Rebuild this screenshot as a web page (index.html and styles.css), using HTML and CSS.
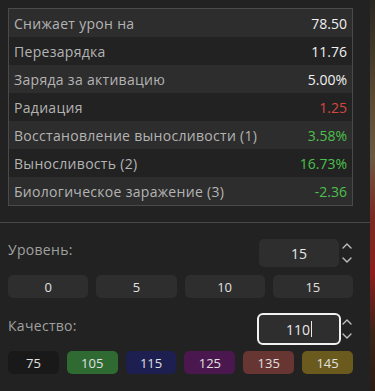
FILE: index.html
```html
<!DOCTYPE html>
<html>

<head>
    <meta charset="utf-8">
    <link rel="stylesheet" href="styles.css">
</head>

<body>
    <div class="screen">
        <div class="panel">
            <!-- Stats table -->
            <div class="stats-area">
                <div class="stats">
                    <div class="stat-row"><span class="stat-name">Снижает урон на</span><span class="stat-value">78.50</span></div>
                    <div class="stat-row"><span class="stat-name">Перезарядка</span><span class="stat-value">11.76</span></div>
                    <div class="stat-row"><span class="stat-name">Заряда за активацию</span><span class="stat-value">5.00%</span></div>
                    <div class="stat-row"><span class="stat-name">Радиация</span><span class="stat-value bad">1.25</span></div>
                    <div class="stat-row"><span class="stat-name">Восстановление выносливости (1)</span><span class="stat-value good">3.58%</span></div>
                    <div class="stat-row"><span class="stat-name">Выносливость (2)</span><span class="stat-value good">16.73%</span></div>
                    <div class="stat-row"><span class="stat-name">Биологическое заражение (3)</span><span class="stat-value good">-2.36</span></div>
                </div>
            </div>

            <!-- Level and quality controls -->
            <div class="controls">
                <div class="field-row">
                    <div class="field-label">Уровень:</div>
                    <div class="number-field">
                        <div class="number-box">15</div>
                        <svg class="spinner" width="14" height="28" viewBox="0 0 14 28">
                            <path d="M3 9 L7 5 L11 9" fill="none" stroke="#bdbdbd" stroke-width="1.4" stroke-linecap="round" stroke-linejoin="round" />
                            <path d="M3 19 L7 23 L11 19" fill="none" stroke="#bdbdbd" stroke-width="1.4" stroke-linecap="round" stroke-linejoin="round" />
                        </svg>
                    </div>
                </div>
                <div class="preset-row level-presets">
                    <button class="preset">0</button>
                    <button class="preset">5</button>
                    <button class="preset">10</button>
                    <button class="preset">15</button>
                </div>

                <div class="field-row quality-row">
                    <div class="field-label">Качество:</div>
                    <div class="number-field">
                        <div class="number-box focused">110<span class="caret"></span></div>
                        <svg class="spinner" width="14" height="28" viewBox="0 0 14 28">
                            <path d="M3 9 L7 5 L11 9" fill="none" stroke="#bdbdbd" stroke-width="1.4" stroke-linecap="round" stroke-linejoin="round" />
                            <path d="M3 19 L7 23 L11 19" fill="none" stroke="#bdbdbd" stroke-width="1.4" stroke-linecap="round" stroke-linejoin="round" />
                        </svg>
                    </div>
                </div>
                <div class="preset-row quality-presets">
                    <button class="preset q75">75</button>
                    <button class="preset q105">105</button>
                    <button class="preset q115">115</button>
                    <button class="preset q125">125</button>
                    <button class="preset q135">135</button>
                    <button class="preset q145">145</button>
                </div>
            </div>
        </div>
        <div class="backdrop"></div>
    </div>
</body>

</html>
```

FILE: styles.css
```css
body {
    margin: 0;
    background-color: #212121;
    font-family: 'Open Sans', 'Liberation Sans', sans-serif;
    font-size: 14px;
    color: #e6e6e6;
}

.screen {
    display: flex;
    height: 391px;
    overflow: hidden;
}

.panel {
    width: 370px;
    background-color: #222222;
}

/* image behind the panel */
.backdrop {
    flex: 1;
    background: linear-gradient(180deg, #2a2620 0%, #5a4a30 25%, #6b5a40 40%, #7a2a22 55%, #8a1e1a 70%, #3a2418 85%, #2a1c14 100%);
}

/* Stats table */
.stats-area {
    padding: 8px 17px 16px 8px;
    border-bottom: 1px solid #484848;
}

.stats {
    border: 1px solid #4a4a4a;
}

.stat-row {
    display: flex;
    justify-content: space-between;
    align-items: center;
    height: 28px;
    padding: 0 5px 0 5px;
    background-color: #222222;
}

.stat-row:nth-child(odd) {
    background-color: #2d2d2d;
}

.stat-name {
    color: #b4b4b4;
    letter-spacing: 0.3px;
}

.stat-value {
    color: #f0f0f0;
}

.stat-value.bad {
    color: #d9463f;
}

.stat-value.good {
    color: #4cc04c;
}

/* Controls */
.controls {
    padding: 16px 16px 0 8px;
}

.field-row {
    display: flex;
    justify-content: space-between;
    align-items: center;
    height: 28px;
}

.quality-row {
    margin-top: 17px;
}

.field-label {
    color: #a0a0a0;
    letter-spacing: 0.3px;
    margin-bottom: 7px;
}

.number-field {
    display: flex;
    align-items: center;
    gap: 1px;
}

.number-box {
    width: 80px;
    height: 28px;
    box-sizing: border-box;
    background-color: #2e2e2e;
    border-radius: 5px;
    display: flex;
    align-items: center;
    justify-content: center;
    color: #e8e8e8;
}

.number-box.focused {
    outline: 2px solid #f2f2f2;
    outline-offset: 0;
    border-radius: 4px;
}

.caret {
    display: inline-block;
    width: 1px;
    height: 16px;
    margin-left: 1px;
    background-color: #e8e8e8;
}

.spinner {
    display: block;
}

.preset-row {
    display: flex;
    gap: 8px;
    margin-top: 8px;
    margin-right: 1px;
}

.preset {
    flex: 1;
    height: 23px;
    border: none;
    border-radius: 5px;
    background-color: #2e2e2e;
    color: #e0e0e0;
    font-family: inherit;
    font-size: 13px;
    padding: 0;
}

.q75 {
    background-color: #191919;
}

.q105 {
    background-color: #2f6a33;
}

.q115 {
    background-color: #1c1f50;
}

.q125 {
    background-color: #4a184e;
}

.q135 {
    background-color: #673532;
}

.q145 {
    background-color: #6a5a1d;
}
```
